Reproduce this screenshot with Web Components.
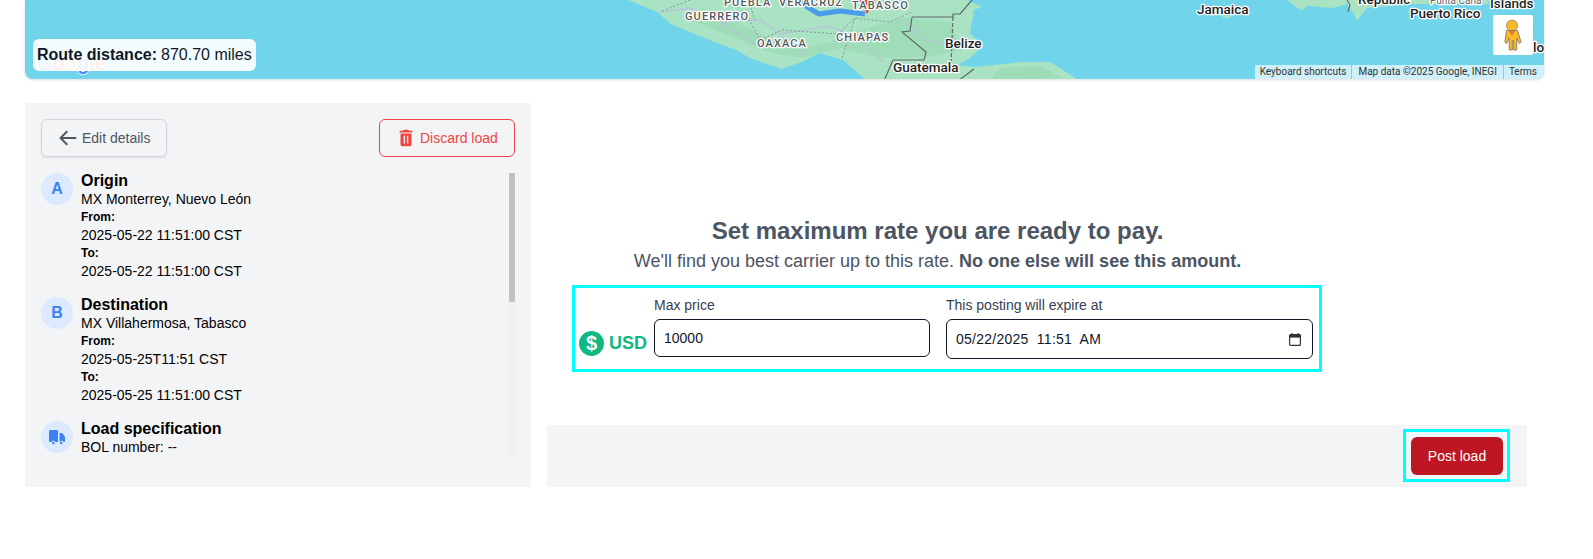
<!DOCTYPE html>
<html lang="en">
<head>
<meta charset="utf-8">
<title>Post load</title>
<style>
    html, body { margin: 0; background: #fff; }
    body { font-family: "Liberation Sans", Arial, sans-serif; color: #000; overflow: hidden; }
</style>
</head>
<body>
<post-load-page>
    <route-map slot="map" distance="870.70 miles"></route-map>
    <load-panel slot="left">
        <stop-item>
            <span slot="badge">A</span>
            <span slot="heading">Origin</span>
            <div>MX Monterrey, Nuevo León</div>
            <div class="lbl">From:</div>
            <div>2025-05-22 11:51:00 CST</div>
            <div class="lbl">To:</div>
            <div>2025-05-22 11:51:00 CST</div>
        </stop-item>
        <stop-item>
            <span slot="badge">B</span>
            <span slot="heading">Destination</span>
            <div>MX Villahermosa, Tabasco</div>
            <div class="lbl">From:</div>
            <div>2025-05-25T11:51 CST</div>
            <div class="lbl">To:</div>
            <div>2025-05-25 11:51:00 CST</div>
        </stop-item>
        <stop-item>
            <svg slot="badge" width="16" height="16" viewBox="0 0 16 16" fill="currentColor">
                <path d="M0 2.500C0 1.700.6 1 1.400 1h6.200C8.400 1 9 1.700 9 2.500V13H6.200a2 2 0 0 0-3.600 0H1.200C.5 13 0 12.500 0 11.800z"/>
                <path d="M10.500 4h2c.5 0 .9.2 1.200.6l1.900 3c.3.3.4.7.4 1.100v3.500c0 .4-.3.8-.8.8h-.6a2 2 0 0 0-3.600-.2h-.5z"/>
                <circle cx="4.400" cy="14" r="1.300"/><circle cx="12.200" cy="14" r="1.300"/>
            </svg>
            <span slot="heading">Load specification</span>
            <div>BOL number: --</div>
        </stop-item>
    </load-panel>
    <rate-panel slot="right"></rate-panel>
</post-load-page>

<script>
class RouteMap extends HTMLElement {
    constructor() {
        super();
        const shadowRoot = this.attachShadow({ mode: 'open' });
        shadowRoot.innerHTML = /*html*/ `
            <style>
                :host {
                    display: block;
                    position: relative;
                    height: 79px;
                    overflow: hidden;
                    background: #70d4ea;
                    border-radius: 0 0 8px 8px;
                    box-shadow: 0 1px 3px rgba(0,0,0,.14);
                    font-family: Roboto, sans-serif;
                }
                svg { display: block; position: absolute; left: 0; top: 0; }
                text { paint-order: stroke; stroke: #fff; stroke-width: 2.5px; stroke-linejoin: round; }
                .state { font: 500 11px Roboto, sans-serif; letter-spacing: 1.1px; fill: #55595d; }
                .country { font: 500 13.5px Roboto, sans-serif; fill: #1f1f1f; }
                .logo { font: 700 20px "Liberation Sans", sans-serif; stroke-width: 1.5px; }
                .chip {
                    position: absolute;
                    left: 8px;
                    top: 39px;
                    height: 32px;
                    padding: 0 4px;
                    display: flex;
                    align-items: center;
                    gap: 4px;
                    background: rgba(255,255,255,.91);
                    border-radius: 6px;
                    color: #111827;
                    font: 16px "Liberation Sans", Arial, sans-serif;
                    white-space: nowrap;
                }
                .pegman {
                    position: absolute;
                    left: 1468px;
                    top: 15px;
                    width: 40px;
                    height: 40px;
                    background: #fff;
                    border-radius: 2px;
                }
                .pegman svg { left: 0; top: 0; }
                .attrib {
                    position: absolute;
                    right: 0;
                    bottom: 0;
                    height: 14px;
                    display: flex;
                    font-size: 10px;
                    line-height: 14px;
                    color: #333;
                }
                .attrib span { background: rgba(255,255,255,.66); padding: 0 6px; margin-left: 1px; }
                .attrib span:first-child { padding: 0 5px; }
                .attrib span:last-child { padding: 0 7px 0 5px; }
            </style>
            <svg width="1519" height="79" viewBox="25 0 1519 79" fill="none">
                <path fill="#aae2c4" d="M628 0 657 12 671 24 692 33 712 41 736 50 750 58 781 69 802 62 819 53 843 60 867 81 1080 81 1050 62 1022 62 974 67 957 65 970 58 984 45 970 34 974 10 982 7 967 0Z"/>
                <path fill="#93d8af" d="M700 8 735 22 772 40 800 50 830 42 860 30 905 18 950 22 962 50 930 56 900 58 870 56 840 48 800 58 770 52 730 36 690 20Z" opacity=".55"/>
                <path fill="#93d8af" d="M1000 68 1040 66 1062 78 990 80Z" opacity=".6"/>
                <path stroke="#b7c6d8" stroke-width="1.400" d="M660 12 690 8 720 22 755 44M720 22 760 20 780 34 805 54M780 34 830 26 860 40 884 62M905 22 925 40 950 45"/>
                <path stroke="#7f8f8c" stroke-width=".9" stroke-dasharray="2 2" d="M690 0 660 12M745 12 760 40 782 30 838 34 855 18 890 22 912 12M748 0 755 20M855 18 842 58"/>
                <path fill="#aae2c4" d="M1287 0 1297 8 1302 10 1307 6 1333 8 1347 4 1354 14 1357 21 1367 8 1413 4 1487 4 1490 0Z"/>
                <path fill="#aae2c4" d="M1220 15 1232 16 1226 19Z"/>
                <path stroke="#5f6a68" stroke-width="1.200" d="M912 17 953 17 953 14 960 14 972 0M912 17 910 31 902 32 926 52 924 60 893 60 884 81M974 69 958 81M1347 0 1350 5 1348 12"/>
                <path stroke="#5f6a68" stroke-width="1.200" stroke-dasharray="4 2" d="M953 17 951 65"/>
                <path stroke="#4a9ded" stroke-width="5" stroke-linejoin="round" d="M796 0 812 10 819 14 840 11 865 14"/>
                <path fill="#ea4335" d="M859 0 875 0 867 14Z"/>
                <text class="state" x="685" y="20">GUERRERO</text>
                <text class="state" x="724" y="6">PUEBLA</text>
                <text class="state" x="779" y="6">VERACRUZ</text>
                <text class="state" x="852" y="9">TABASCO</text>
                <text class="state" x="757" y="47">OAXACA</text>
                <text class="state" x="836" y="41">CHIAPAS</text>
                <text class="country" x="945" y="48">Belize</text>
                <text class="country" x="893" y="72">Guatemala</text>
                <text class="country" x="1197" y="14">Jamaica</text>
                <text class="country" x="1358" y="4">Republic</text>
                <text x="1430" y="4" style="font:10px Roboto,sans-serif;fill:#666">Punta Cana</text>
                <text class="country" x="1410" y="18">Puerto Rico</text>
                <text class="country" x="1490" y="8">Islands</text>
                <text class="country" x="1533" y="52">lo</text>
                <text class="logo" x="37" y="70"><tspan fill="#4285f4">G</tspan><tspan fill="#ea4335">o</tspan><tspan fill="#fbbc05">o</tspan><tspan fill="#4285f4">g</tspan><tspan fill="#34a853">l</tspan><tspan fill="#ea4335">e</tspan></text>
            </svg>
            <div class="pegman">
                <svg width="40" height="40" viewBox="0 0 40 40">
                    <circle cx="19" cy="10.500" r="5.500" fill="#fdb827" stroke="#94835f" stroke-width=".8"/>
                    <path fill="#fdb827" stroke="#86795f" stroke-width=".9" stroke-linejoin="round" d="M13.500 15.500h11l3.600 11.600-1.800 1.400-2.500-5.500V35h-3.100v-9.500h-1.400V35h-3.100V23l-2.500 5.500-1.800-1.400z"/>
                    <path fill="#e0702e" d="M16 16h6l-3 4.500z"/>
                </svg>
            </div>
            <div class="chip"><b>Route distance:</b><span>${this.getAttribute('distance')}</span></div>
            <div class="attrib">
                <span>Keyboard shortcuts</span>
                <span>Map data ©2025 Google, INEGI</span>
                <span>Terms</span>
            </div>
        `;
    }
}
customElements.define('route-map', RouteMap);

class StopItem extends HTMLElement {
    constructor() {
        super();
        const shadowRoot = this.attachShadow({ mode: 'open' });
        shadowRoot.innerHTML = /*html*/ `
            <style>
                :host {
                    display: flex;
                    gap: 8px;
                    margin-bottom: 17px;
                    font-size: 14px;
                    line-height: 18px;
                }
                .badge {
                    flex: none;
                    width: 32px;
                    height: 32px;
                    border-radius: 50%;
                    background: #dbeafe;
                    color: #3b82f6;
                    display: flex;
                    align-items: center;
                    justify-content: center;
                    font-size: 16px;
                    font-weight: 700;
                }
                .body { margin-top: -3px; }
                .heading { font-size: 16px; font-weight: 700; line-height: 19px; padding-top: 1px; }
                ::slotted(.lbl) { font-size: 12px; font-weight: 700; }
            </style>
            <div class="badge"><slot name="badge"></slot></div>
            <div class="body">
                <div class="heading"><slot name="heading"></slot></div>
                <slot></slot>
            </div>
        `;
    }
}
customElements.define('stop-item', StopItem);

class LoadPanel extends HTMLElement {
    constructor() {
        super();
        const shadowRoot = this.attachShadow({ mode: 'open' });
        shadowRoot.innerHTML = /*html*/ `
            <style>
                :host {
                    display: block;
                    background: #f3f4f6;
                    padding: 16px 16px 27px;
                    height: 384px;
                    box-sizing: border-box;
                }
                .actions { display: flex; justify-content: space-between; margin-bottom: 16px; }
                button {
                    height: 38px;
                    box-sizing: border-box;
                    display: flex;
                    align-items: center;
                    background: transparent;
                    border-radius: 6px;
                    font: 14px "Liberation Sans", Arial, sans-serif;
                    padding: 0;
                }
                .edit {
                    width: 126px;
                    padding-left: 16px;
                    gap: 4px;
                    color: #4b5563;
                    border: 1px solid #d1d5db;
                    box-shadow: 0 1px 2px rgba(0,0,0,.08);
                }
                .discard {
                    width: 136px;
                    padding-left: 16px;
                    gap: 3px;
                    color: #ef4444;
                    border: 1px solid #ef4444;
                }
                .scroll { display: flex; justify-content: space-between; height: 287px; }
                .list { flex: 1; overflow: hidden; }
                .track { flex: none; width: 6px; background: #f1f1f1; }
                .thumb { height: 129px; background: #c1c1c1; }
            </style>
            <div class="actions">
                <button class="edit">
                    <svg width="20" height="20" viewBox="0 0 24 24" fill="none" stroke="currentColor" stroke-width="2.300" stroke-linecap="round" stroke-linejoin="round"><path d="M10.500 19.500 3 12l7.500-7.500M3 12h18"/></svg>
                    Edit details
                </button>
                <button class="discard">
                    <svg width="22" height="22" viewBox="0 0 24 24" fill="currentColor" style="margin-left:-1px"><path fill-rule="evenodd" d="M6 19c0 1.100.9 2 2 2h8c1.100 0 2-.9 2-2V7H6zm3.500-9.500H11V18H9.500zm3.500 0h1.500V18H13zM19 4h-3.500l-1-1h-5l-1 1H5v2h14z"/></svg>
                    Discard load
                </button>
            </div>
            <div class="scroll">
                <div class="list"><slot></slot></div>
                <div class="track"><div class="thumb"></div></div>
            </div>
        `;
    }
}
customElements.define('load-panel', LoadPanel);

class RatePanel extends HTMLElement {
    constructor() {
        super();
        const shadowRoot = this.attachShadow({ mode: 'open' });
        shadowRoot.innerHTML = /*html*/ `
            <style>
                :host {
                    display: flex;
                    flex-direction: column;
                    height: 384px;
                    color: #4b5563;
                }
                .main { flex: 1; padding-top: 112px; width: 781px; text-align: center; }
                h2 { margin: 0; font-size: 24px; line-height: 32px; font-weight: 700; }
                p { margin: 0 0 10px; font-size: 18px; line-height: 28px; }
                .form {
                    box-sizing: border-box;
                    width: 750px;
                    height: 87px;
                    margin-left: 25px;
                    border: 3px solid #0ff;
                    padding: 8px 6px 0 4px;
                    display: flex;
                    text-align: left;
                    color: #374151;
                    font-size: 14px;
                }
                .currency {
                    width: 75px;
                    flex: none;
                    display: flex;
                    align-items: center;
                    gap: 5px;
                    height: 25px;
                    margin-top: 35px;
                    color: #10b981;
                    font-size: 18px;
                    font-weight: 700;
                }
                .coin {
                    flex: none;
                    width: 25px;
                    height: 25px;
                    border-radius: 50%;
                    background: #10b981;
                    color: #fff;
                    text-align: center;
                    line-height: 25px;
                    font-size: 20px;
                }
                label { display: block; line-height: 18px; }
                input {
                    box-sizing: border-box;
                    border: 1px solid #111827;
                    border-radius: 6px;
                    background: #fff;
                    color: #111827;
                    font: 14px "Liberation Sans", Arial, sans-serif;
                    padding: 0 9px;
                }
                .price { width: 276px; margin-right: 16px; }
                .price input { display: block; margin-top: 5px; width: 276px; height: 38px; }
                .expire { width: 367px; }
                .date-box {
                    margin-top: 5px;
                    height: 40px;
                    box-sizing: border-box;
                    border: 1px solid #111827;
                    border-radius: 6px;
                    background: #fff;
                    display: flex;
                    align-items: center;
                    padding-right: 11px;
                }
                .date-box input {
                    flex: 1;
                    min-width: 0;
                    height: 100%;
                    border: 0;
                    background: transparent;
                    letter-spacing: .25px;
                    outline: none;
                }
                .footer {
                    height: 62px;
                    background: #f3f4f6;
                    display: flex;
                    justify-content: flex-end;
                    align-items: flex-start;
                    padding-right: 17px;
                }
                .outline { border: 3px solid #0ff; padding: 5px 4px 4px 5px; margin-top: 4px; background: #eef7f9; display: flex; }
                .post {
                    width: 92px;
                    height: 38px;
                    background: #be1622;
                    color: #fff;
                    border: 0;
                    border-radius: 6px;
                    font: 14px "Liberation Sans", Arial, sans-serif;
                }
            </style>
            <div class="main">
                <h2>Set maximum rate you are ready to pay.</h2>
                <p>We'll find you best carrier up to this rate. <b>No one else will see this amount.</b></p>
                <div class="form">
                    <div class="currency"><span class="coin">$</span>USD</div>
                    <div class="price">
                        <label for="price">Max price</label>
                        <input id="price" type="text" value="10000">
                    </div>
                    <div class="expire">
                        <label for="expire">This posting will expire at</label>
                        <div class="date-box">
                            <input id="expire" type="text" value="05/22/2025  11:51  AM">
                            <svg width="12" height="13" viewBox="0 0 12 13" fill="none">
                                <rect x=".6" y="1.600" width="10.800" height="10.800" rx="1" stroke="#333" stroke-width="1.200"/>
                                <rect x=".6" y="1.600" width="10.800" height="3" fill="#333"/>
                                <path d="M3 0v2M9 0v2" stroke="#333" stroke-width="1.200"/>
                            </svg>
                        </div>
                    </div>
                </div>
            </div>
            <div class="footer">
                <div class="outline"><button class="post">Post load</button></div>
            </div>
        `;
    }
}
customElements.define('rate-panel', RatePanel);

class PostLoadPage extends HTMLElement {
    constructor() {
        super();
        const shadowRoot = this.attachShadow({ mode: 'open' });
        shadowRoot.innerHTML = /*html*/ `
            <style>
                :host { display: block; padding: 0 49px 0 25px; height: 559px; box-sizing: border-box; }
                .columns {
                    display: grid;
                    grid-template-columns: 506px 980px;
                    column-gap: 16px;
                    margin-top: 24px;
                }
            </style>
            <slot name="map"></slot>
            <div class="columns">
                <slot name="left"></slot>
                <slot name="right"></slot>
            </div>
        `;
    }
}
customElements.define('post-load-page', PostLoadPage);
</script>
</body>
</html>
